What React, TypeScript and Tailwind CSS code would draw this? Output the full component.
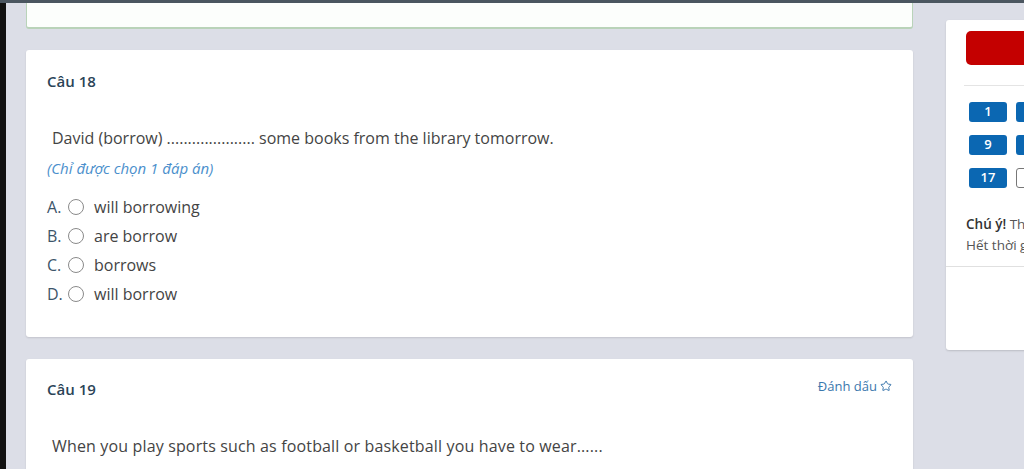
import { Star } from "lucide-react"

const options = [
    { key: "A", text: "will borrowing" },
    { key: "B", text: "are borrow" },
    { key: "C", text: "borrows" },
    { key: "D", text: "will borrow" },
]

const grid = [
    ["1", "2"],
    ["9", "10"],
    ["17", "18"],
]

export default function App() {
    return (
        <div
            className="flex flex-col w-[1024px] h-[469px] overflow-hidden bg-[#dcdee7] text-[#444]"
            style={{ fontFamily: '"Open Sans", "Noto Sans", sans-serif' }}
        >
            <div className="h-[3px] bg-[#4b5660] shrink-0" />

            <div className="flex flex-1 min-h-0">
                <div className="w-[6px] bg-[#111] shrink-0" />

                {/* questions column */}
                <div className="flex flex-col w-[887px] ml-[20px] shrink-0">
                    <div className="h-[26px] bg-[#fcfefc] border border-t-0 border-[#b9d3b9] border-b-2 rounded-b-[3px]" />

                    <div className="mt-[21px] h-[287px] bg-white rounded-[3px] shadow-[0_1px_2px_rgba(0,0,0,0.12)] px-[21px] pt-[21px]">
                        <p className="text-[15px] leading-[20px] font-semibold text-[#2b4457]">Câu 18</p>
                        <p className="mt-[35px] pl-[5px] text-[16px] leading-[24px] text-[#444]">
                            David (borrow) ..................... some books from the library tomorrow.
                        </p>
                        <p className="mt-[8px] text-[15px] leading-[20px] italic text-[#4b8fcc]">(Chỉ được chọn 1 đáp án)</p>
                        <div className="mt-[14px] flex flex-col">
                            {options.map((o) => (
                                <div key={o.key} className="flex items-center h-[29px]">
                                    <span className="text-[16px] text-[#3d556a] w-[21px]">{o.key}.</span>
                                    <span className="w-[16px] h-[16px] rounded-full border border-[#8a8a8a] bg-white" />
                                    <span className="ml-[10px] text-[16px] text-[#444]">{o.text}</span>
                                </div>
                            ))}
                        </div>
                    </div>

                    <div className="mt-[22px] flex-1 bg-white rounded-t-[3px] shadow-[0_1px_2px_rgba(0,0,0,0.12)] px-[21px] pt-[14px]">
                        <div className="flex justify-between">
                            <p className="mt-[6px] text-[15px] leading-[20px] font-semibold text-[#2b4457]">Câu 19</p>
                            <p className="flex items-center gap-[3px] text-[13px] leading-[18px] text-[#3b77ad]">
                                Đánh dấu <Star size={12} strokeWidth={2} />
                            </p>
                        </div>
                        <p className="mt-[35px] pl-[5px] text-[16px] leading-[24px] tracking-[0.15px] text-[#444]">
                            When you play sports such as football or basketball you have to wear......
                        </p>
                    </div>
                </div>

                {/* right panel */}
                <div className="ml-[33px] mt-[17px] w-[300px] h-[330px] shrink-0 bg-white rounded-[3px] shadow-[0_1px_2px_rgba(0,0,0,0.15)] flex flex-col">
                    <div className="px-[20px] pt-[11px]">
                        <div className="h-[34px] rounded-[5px] bg-[#c40000]" />
                        <div className="mt-[20px] border-t border-[#e4e4e4] -mr-[20px] -ml-[2px]" />
                        <div className="mt-[16px] ml-[3px] flex flex-col gap-[13px]">
                            {grid.map((row, i) => (
                                <div key={i} className="flex gap-[9px]">
                                    {row.map((n, j) => (
                                        <span
                                            key={n}
                                            className={
                                                i === 2 && j === 1
                                                    ? "w-[38px] h-[20px] rounded-[3px] border border-[#777] bg-white text-[#333] text-[13px] font-semibold flex items-center justify-center"
                                                    : "w-[38px] h-[20px] rounded-[3px] bg-[#0b67b2] text-white text-[13px] font-semibold flex items-center justify-center"
                                            }
                                        >
                                            {n}
                                        </span>
                                    ))}
                                </div>
                            ))}
                        </div>
                        <p className="mt-[26px] text-[13.5px] leading-[21px] text-[#555] whitespace-nowrap">
                            <span className="font-semibold text-[#333]">Chú ý!</span> Thí sinh không được thoát ra
                        </p>
                        <p className="text-[13.5px] leading-[21px] text-[#555] whitespace-nowrap">Hết thời gian sẽ tự động nộp bài</p>
                    </div>
                    <div className="mt-[10px] border-t border-[#e0e0e0]" />
                </div>
            </div>
        </div>
    )
}
